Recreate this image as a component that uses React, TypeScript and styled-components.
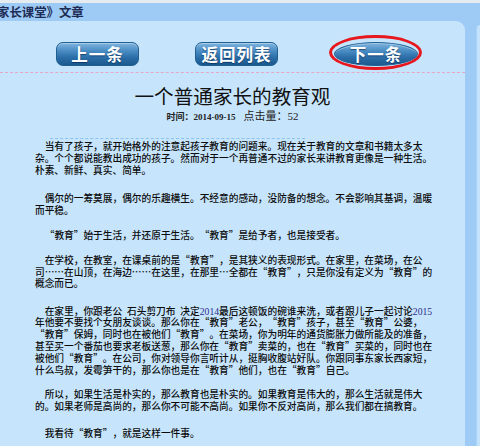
import type { ReactNode } from "react";
import styled, { createGlobalStyle } from "styled-components";

const GlobalStyle = createGlobalStyle`
	html, body {
		margin: 0;
		padding: 0;
		background: #9dcbf6;
	}
	* {
		box-sizing: border-box;
	}
`;

const CJK = `"Noto Sans CJK SC", "Noto Sans", sans-serif`;

const Page = styled.div`
	width: 480px;
	height: 446px;
	overflow: hidden;
	display: flex;
	flex-direction: column;
	background: #9dcbf6;
	font-family: ${CJK};
`;

const TopBar = styled.div`
	height: 3px;
	background: #e6ebef;
	flex-shrink: 0;
`;

const Header = styled.div`
	height: 18px;
	flex-shrink: 0;
	overflow: hidden;
	white-space: nowrap;
	font-size: 12.4px;
	font-weight: 700;
	line-height: 18px;
	color: #1d2c55;
	margin-left: -3px;
`;

const Body = styled.div`
	flex: 1;
	display: flex;
`;

const Panel = styled.div`
	width: 465px;
	flex-shrink: 0;
	background: #c6e5fc;
	border-top-right-radius: 9px;
`;

const Side = styled.div`
	flex: 1;
	padding: 4px 0 0 11px;
`;

const SidePanel = styled.div`
	height: 100%;
	background: #c3e2fb;
	border-top-left-radius: 6px;
	border-left: 1px solid #a9d3f7;
`;

const ButtonRow = styled.div`
	display: flex;
	gap: 56px;
	padding: 21px 0 0 56px;
`;

const NavButton = styled.button<{ $oval?: boolean }>`
	position: relative;
	width: ${(p) => (p.$oval ? "84px" : "83px")};
	height: 24px;
	padding: 0;
	border: 1px solid #1f5f92;
	border-radius: ${(p) => (p.$oval ? "50%" : "7px")};
	background: linear-gradient(
		to bottom,
		#7fb5de 0%,
		#4b8dc4 35%,
		#2b6ea8 65%,
		#1c5a8e 100%
	);
	box-shadow: inset 0 1px 0 rgba(255, 255, 255, 0.35);
	color: #ffffff;
	font-family: ${CJK};
	font-size: 16.5px;
	font-weight: 700;
	line-height: 22px;
	letter-spacing: 1px;
	text-shadow: 0 1px 1px rgba(0, 30, 70, 0.6);
	cursor: pointer;
`;

const Circle = styled.span`
	position: absolute;
	left: -6px;
	right: -5px;
	top: -8px;
	bottom: -5px;
	border: 3px solid #e8161d;
	border-radius: 50%;
	pointer-events: none;
`;

const PinkDash = styled.div`
	margin-top: 6px;
	border-top: 1px dashed #e7a6c3;
`;

const Title = styled.h1`
	margin: 11px 0 0;
	text-align: center;
	font-family: ${CJK};
	font-size: 19.6px;
	font-weight: 400;
	line-height: 24px;
	color: #111;
`;

const Meta = styled.div`
	margin-top: -2px;
	text-align: center;
	line-height: 14px;
	color: #222;
`;

const MetaTime = styled.span`
	font-size: 9px;
	font-weight: 700;
	font-family: "Liberation Serif", ${CJK};
	margin-right: 8px;
`;

const MetaHits = styled.span`
	font-size: 11px;
	font-family: "Liberation Serif", ${CJK};
`;

const BlueDash = styled.div`
	margin: 14px 0 0 50px;
	width: 255px;
	border-top: 1px dashed #8ec3ef;
`;

const Article = styled.div`
	margin-top: 2px;
	padding-left: 35px;
	font-size: 9.7px;
	font-weight: 500;
	line-height: 11.8px;
	color: #0c0c0c;
`;

const Para = styled.p<{ $after?: number }>`
	margin: 0 0 ${(p) => p.$after ?? 14}px;
	text-indent: 1em;
	white-space: nowrap;
`;

const Num = styled.span`
	font-family: "Liberation Serif", serif;
	color: #2b2b8c;
`;

const Term = styled.span`
	white-space: nowrap;
`;

const Mark = styled.span<{ $open?: boolean }>`
	display: inline-block;
	width: 1em;
	line-height: 1;
	text-indent: 0;
	text-align: ${(p) => (p.$open ? "right" : "left")};
`;

const Quoted = ({ children }: { children: ReactNode }) => (
	<Term>
		<Mark $open>“</Mark>
		{children}
		<Mark>”</Mark>
	</Term>
);

const JY = () => <Quoted>教育</Quoted>;

export default function App() {
	return (
		<>
			<GlobalStyle />
			<Page>
				<TopBar />
				<Header>家长课堂》文章</Header>
				<Body>
					<Panel>
						<ButtonRow>
							<NavButton>上一条</NavButton>
							<NavButton>返回列表</NavButton>
							<NavButton $oval>
								下一条
								<Circle />
							</NavButton>
						</ButtonRow>
						<PinkDash />
						<Title>一个普通家长的教育观</Title>
						<Meta>
							<MetaTime>时间：2014-09-15</MetaTime>
							<MetaHits>点击量：52</MetaHits>
						</Meta>
						<BlueDash />
						<Article>
							<Para $after={17}>
								当有了孩子，就开始格外的注意起孩子教育的问题来。现在关于教育的文章和书籍太多太
								<br />
								杂。个个都说能教出成功的孩子。然而对于一个再普通不过的家长来讲教育更像是一种生活。
								<br />
								朴素、新鲜、真实、简单。
							</Para>
							<Para $after={13}>
								偶尔的一筹莫展，偶尔的乐趣横生。不经意的感动，没防备的想念。不会影响其基调，温暖
								<br />
								而平稳。
							</Para>
							<Para $after={13}>
								<JY />始于生活，并还原于生活。<JY />是给予者，也是接受者。
							</Para>
							<Para $after={15.5}>
								在学校，在教室，在课桌前的是<JY />，是其狭义的表现形式。在家里，在菜场，在公
								<br />
								司……在山顶，在海边……在这里，在那里…全都在<JY />，只是你没有定义为<JY />的
								<br />
								概念而已。
							</Para>
							<Para $after={13}>
								在家里，你跟老公{"\u2002"}石头剪刀布{"\u2002"}决定<Num>2014</Num>
								最后这顿饭的碗谁来洗，或者跟儿子一起讨论<Num>2015</Num>
								<br />
								年他要不要找个女朋友谈谈。那么你在<JY />老公，<JY />孩子，甚至<JY />公婆，
								<br />
								<JY />保姆，同时也在被他们<JY />。在菜场，你为明年的通货膨胀力做所能及的准备，
								<br />
								甚至买一个番茄也要求老板送葱，那么你在<JY />卖菜的，也在<JY />买菜的，同时也在
								<br />
								被他们<JY />。在公司，你对领导你言听计从，挺胸收腹站好队。你跟同事东家长西家短，
								<br />
								什么鸟叔，发霉笋干的，那么你也是在<JY />他们，也在<JY />自己。
							</Para>
							<Para $after={15}>
								所以，如果生活是朴实的，那么教育也是朴实的。如果教育是伟大的，那么生活就是伟大
								<br />
								的。如果老师是高尚的，那么你不可能不高尚。如果你不反对高尚，那么我们都在搞教育。
							</Para>
							<Para>
								我看待<JY />，就是这样一件事。
							</Para>
						</Article>
					</Panel>
					<Side>
						<SidePanel />
					</Side>
				</Body>
			</Page>
		</>
	);
}
